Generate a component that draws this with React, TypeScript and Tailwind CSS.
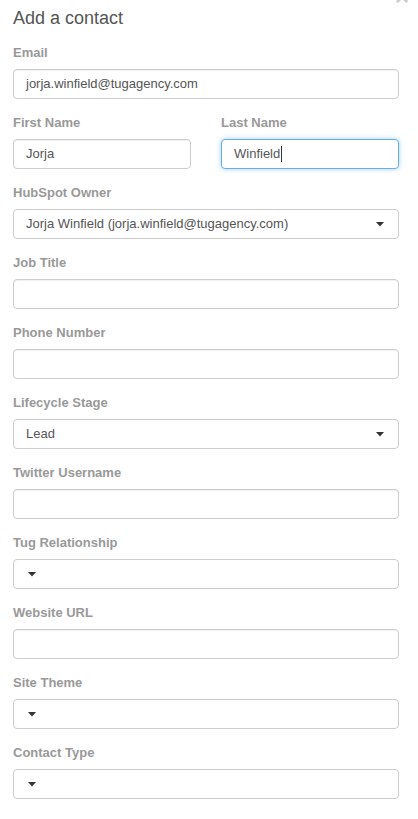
import React from 'react';

type Field = {
  label: string;
  kind: 'text' | 'select';
  value?: string;
};

const fields: Field[] = [
  { label: 'HubSpot Owner', kind: 'select', value: 'Jorja Winfield (jorja.winfield@tugagency.com)' },
  { label: 'Job Title', kind: 'text' },
  { label: 'Phone Number', kind: 'text' },
  { label: 'Lifecycle Stage', kind: 'select', value: 'Lead' },
  { label: 'Twitter Username', kind: 'text' },
  { label: 'Tug Relationship', kind: 'select' },
  { label: 'Website URL', kind: 'text' },
  { label: 'Site Theme', kind: 'select' },
  { label: 'Contact Type', kind: 'select' },
];

function Caret() {
  return (
    <svg width="8" height="5" viewBox="0 0 8 5" className="shrink-0">
      <path d="M0 0 L8 0 L4 4.5 Z" fill="#333" />
    </svg>
  );
}

function Label({ children }: { children: React.ReactNode }) {
  return (
    <div className="h-[18px] text-[13px] leading-[18px] font-bold text-[#999] mb-[7px]">
      {children}
    </div>
  );
}

function TextBox({ value, focused }: { value?: string; focused?: boolean }) {
  return (
    <div
      className={
        focused
          ? 'h-[30px] rounded-[4px] border border-[#66afe9] shadow-[0_0_5px_rgba(102,175,233,0.6)] bg-white flex items-center px-[12px] text-[13px] text-[#555]'
          : 'h-[30px] rounded-[4px] border border-[#ccc] shadow-[inset_0_1px_1px_rgba(0,0,0,0.06)] bg-white flex items-center px-[12px] text-[13px] text-[#555]'
      }
    >
      <span>{value}</span>
      {focused && <span className="w-px h-[16px] bg-[#333] ml-px" />}
    </div>
  );
}

function SelectBox({ value }: { value?: string }) {
  return (
    <div className="h-[30px] rounded-[4px] border border-[#ccc] bg-white flex items-center pl-[12px] pr-[14px] text-[13px] text-[#555]">
      {value ? (
        <>
          <span className="flex-1">{value}</span>
          <Caret />
        </>
      ) : (
        <span className="pl-[2px] pt-px">
          <Caret />
        </span>
      )}
    </div>
  );
}

export default function App() {
  return (
    <div
      className="relative w-[418px] h-[819px] bg-white overflow-hidden pl-[13px] pr-[19px]"
      style={{ fontFamily: '"Liberation Sans", Arial, sans-serif' }}
    >
      <span className="absolute right-[9px] top-[-15px] text-[24px] font-bold text-[#ccc] leading-none">
        ×
      </span>
      <h1 className="pt-[6px] text-[18px] leading-[24px] text-[#555] font-normal mb-[14px]">
        Add a contact
      </h1>

      <div className="mb-[15px]">
        <Label>Email</Label>
        <TextBox value="jorja.winfield@tugagency.com" />
      </div>

      <div className="grid grid-cols-2 gap-x-[30px] mb-[15px]">
        <div>
          <Label>First Name</Label>
          <TextBox value="Jorja" />
        </div>
        <div>
          <Label>Last Name</Label>
          <TextBox value="Winfield" focused />
        </div>
      </div>

      {fields.map((f) => (
        <div key={f.label} className="mb-[15px]">
          <Label>{f.label}</Label>
          {f.kind === 'select' ? <SelectBox value={f.value} /> : <TextBox value={f.value} />}
        </div>
      ))}
    </div>
  );
}
